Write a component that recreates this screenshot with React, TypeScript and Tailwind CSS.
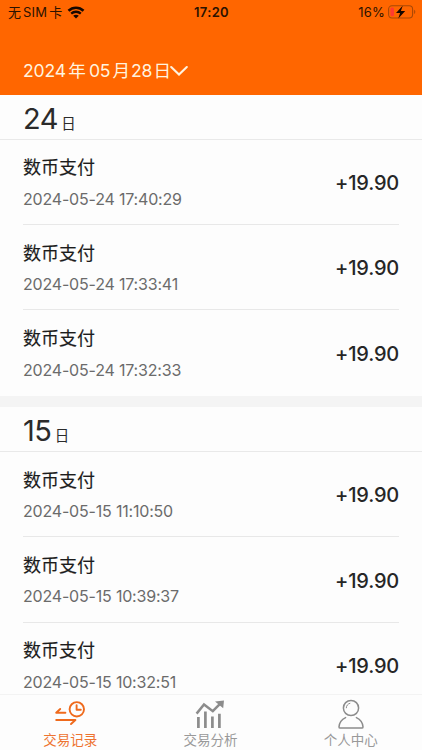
const groups = [
  { day: '24', times: ['2024-05-24 17:40:29', '2024-05-24 17:33:41', '2024-05-24 17:32:33'] },
  { day: '15', times: ['2024-05-15 11:10:50', '2024-05-15 10:39:37', '2024-05-15 10:32:51'] },
];

function StatusBar() {
  return (
    <div className="grid h-6 grid-cols-3 items-center pl-2 pr-[6px] text-[13px] leading-6 text-[#2b1200]">
      <div className="flex items-center">
        <span className="whitespace-nowrap">无<span className="mx-[2px] tracking-[0.2px]">SIM</span>卡</span>
        <svg className="ml-[5px]" width="18" height="13" viewBox="0 0 17 13" fill="none" stroke="#160800">
          <path d="M1 4.8C5.2.8 11.8.8 16 4.8" strokeWidth="2.6" />
          <path d="M3.7 7.6c2.7-2.5 6.9-2.5 9.6 0" strokeWidth="2.3" />
          <path d="M8.5 12.6 5.7 9.8c1.6-1.5 4-1.5 5.6 0z" fill="#160800" stroke="none" />
        </svg>
      </div>
      <span className="pr-[1px] text-center font-semibold tracking-[0.3px]">17:20</span>
      <div className="flex items-center justify-end">
        <span className="tracking-[0.2px]">16%</span>
        <svg className="ml-[3px]" width="28" height="14" viewBox="0 0 28 14">
          <rect x=".6" y=".8" width="24" height="12.2" rx="3.4" fill="none" stroke="#a94806" strokeWidth="1.1" />
          <rect x="2.4" y="2.6" width="3.6" height="8.6" rx="1.5" fill="#ff3b30" />
          <path d="M26.1 4.8c1.6.6 1.6 3.6 0 4.2z" fill="#a94806" />
          <path d="M14.7.7 8 7.9h4.1l-1.8 5.6 6.9-7.4h-4.3z" fill="#140700" />
        </svg>
      </div>
    </div>
  );
}

function Record({ time, last }: { time: string; last: boolean }) {
  return (
    <li className={`mx-[23px] flex h-[85.33px] items-center justify-between border-b pt-[2.5px] ${last ? 'border-transparent' : 'border-[#e8e8e8]'}`}>
      <div>
        <p className="text-[18px] leading-[26px] text-[#1c1c1c] [-webkit-text-stroke:0.15px_#1c1c1c]">数币支付</p>
        <p className="mt-[5.5px] text-[16px] leading-[24px] tracking-[-0.19px] text-[#6b6b6b]">{time}</p>
      </div>
      <span className="text-[20px] leading-[28px] font-medium tracking-[-0.2px] text-[#262626]">+19.90</span>
    </li>
  );
}

function RecordsIcon() {
  return (
    <svg width="32" height="26" viewBox="0 0 32 26" fill="none" stroke="#ef6a1c" strokeWidth="1.9" strokeLinecap="round" strokeLinejoin="round">
      <circle cx="22.8" cy="8.3" r="7.2" />
      <path d="M22.6 4.2v4.6h4.2M11.4 11.8H2.2L6.2 8M2.2 19h19.2L17 23" />
    </svg>
  );
}

function AnalysisIcon() {
  return (
    <svg width="30" height="30" viewBox="0 0 30 30" fill="none" stroke="#8c8c8c">
      <path d="M1.6 14.6 9 5.4l8.8 6.8 7.2-7.4" strokeWidth="2.5" />
      <path d="m20 2.4 9-.8-.8 7.6z" fill="#8c8c8c" stroke="none" />
      <path d="M3.4 18v11M10.4 12.4V29M17.4 17.4V29M24.4 14.8V29" strokeWidth="2.7" />
    </svg>
  );
}

function PersonIcon() {
  return (
    <svg width="28" height="30" viewBox="0 0 28 30" fill="none" stroke="#8c8c8c" strokeWidth="1.5" strokeLinecap="round" strokeLinejoin="round">
      <circle cx="14" cy="9" r="7.6" />
      <path d="M9.3 8.8c.1-2.2 1.5-4 3.6-4.5" strokeWidth="1" />
      <path d="M8.6 18.6c-4 1.8-6.3 5.4-6.6 9.3 0 .8.4 1.2 1.2 1.2h21.6c.8 0 1.2-.4 1.2-1.2-.3-3.9-2.6-7.5-6.6-9.3" />
    </svg>
  );
}

const tabs = [
  { label: '交易记录', icon: <RecordsIcon />, color: 'text-[#ee7430]' },
  { label: '交易分析', icon: <AnalysisIcon />, color: 'text-[#999999]' },
  { label: '个人中心', icon: <PersonIcon />, color: 'text-[#999999]' },
];

export default function App() {
  return (
    <div className="flex h-[750px] w-[422px] flex-col overflow-hidden bg-[#fdfdfd] font-['Inter','Noto_Sans_CJK_SC',sans-serif]">
      <header className="h-[94.5px] shrink-0 bg-[#ff6600]">
        <StatusBar />
        <button className="ml-[23px] mt-[33px] flex h-[28px] items-center text-[17.6px] leading-[28px] whitespace-nowrap text-[#fff3df]">
          <span className="mr-[2.5px] tracking-[-0.2px]">2024</span>年<span className="ml-[3px] mr-[2px] tracking-[-0.2px]">05</span>月<span className="ml-[1px] mr-[1px] tracking-[-0.1px]">28</span>日
          <svg className="-ml-px" width="18" height="12" viewBox="0 0 18 12" fill="none" stroke="#fff3df" strokeWidth="2.1" strokeLinecap="round">
            <path d="m1.2 2 7.8 7.6L16.8 2" />
          </svg>
        </button>
      </header>
      <main className="min-h-0 flex-1 overflow-hidden">
        {groups.map((group, i) => (
          <section key={group.day} className={i > 0 ? 'border-t-[11px] border-[#f4f4f4]' : ''}>
            <h2 className="flex h-[45.2px] items-baseline border-b border-[#e9e9e9] pl-[23px] text-[#2b2b2b]">
              <span className="text-[29px] leading-[47px] tracking-[-0.6px]">{group.day}</span>
              <span className="ml-[3.5px] text-[14.5px]">日</span>
            </h2>
            <ul>
              {group.times.map((time, j) => (
                <Record key={time} time={time} last={j === group.times.length - 1} />
              ))}
            </ul>
          </section>
        ))}
      </main>
      <nav className="grid h-[56px] shrink-0 grid-cols-3 border-t border-[#f3f3f3] bg-[#fdfdfd] pr-[1px]">
        {tabs.map((tab) => (
          <div key={tab.label} className={`flex flex-col items-center ${tab.color}`}>
            <div className="mt-[3px] flex h-[31px] items-center">{tab.icon}</div>
            <span className="mt-[1px] text-[13.5px] leading-[20px]">{tab.label}</span>
          </div>
        ))}
      </nav>
    </div>
  );
}
